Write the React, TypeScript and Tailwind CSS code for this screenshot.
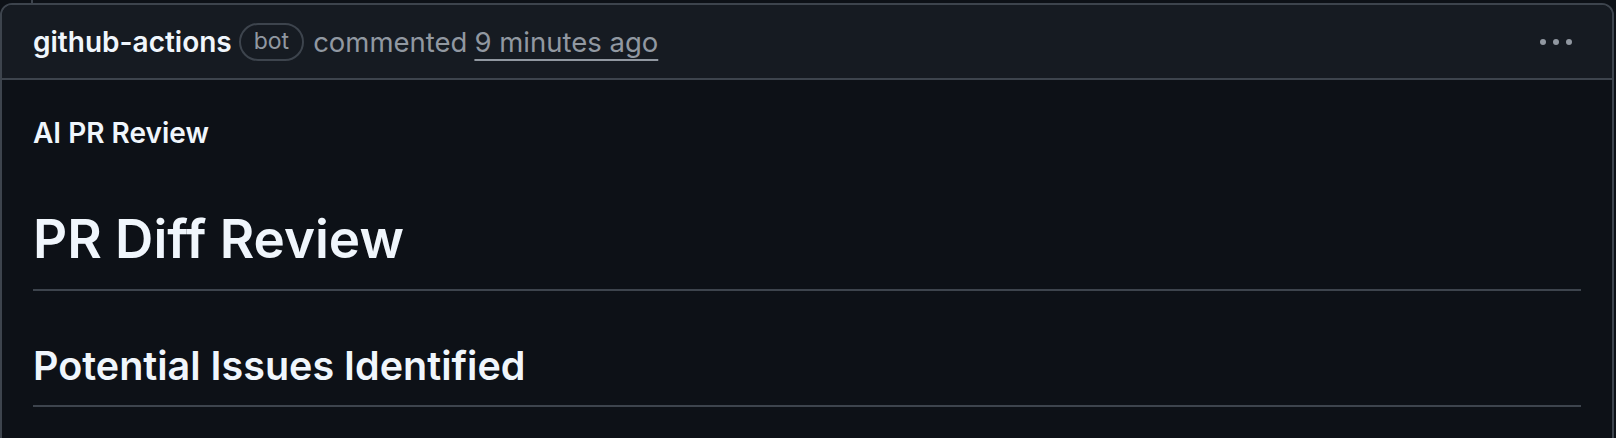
import React from 'react';

const App: React.FC = () => {
  return (
    <div className="w-[1616px] h-[438px] overflow-hidden bg-[#0d1117] pt-[3px] font-['Inter','Liberation_Sans',sans-serif] relative">
      {/* timeline line above card */}
      <div className="absolute left-[31px] top-0 w-[2px] h-[3px] bg-[#3d444d]"></div>

      <div className="w-[1614px] border-2 border-[#3d444d] rounded-t-[12px] overflow-hidden">
        {/* Header */}
        <div className="h-[75px] bg-[#161b22] border-b-2 border-[#3d444d] flex items-center pl-[31px] pr-[40px]">
          <span className="text-[28px] font-semibold text-[#f0f6fc] leading-[36px]">github-actions</span>
          <span className="ml-[7px] h-[38px] px-[13px] rounded-full border-2 border-[#3d444d] text-[23px] text-[#9198a1] flex items-center leading-none">bot</span>
          <span className="ml-[9px] text-[27.5px] text-[#9198a1] leading-[36px]">commented</span>
          <span className="ml-[7px] text-[27.5px] text-[#9198a1] leading-[36px] underline underline-offset-[7px] decoration-2">9 minutes ago</span>
          <div className="ml-auto flex gap-[7px]">
            <div className="w-[6px] h-[6px] rounded-full bg-[#9198a1]"></div>
            <div className="w-[6px] h-[6px] rounded-full bg-[#9198a1]"></div>
            <div className="w-[6px] h-[6px] rounded-full bg-[#9198a1]"></div>
          </div>
        </div>

        {/* Body */}
        <div className="px-[31px] pt-[33px] h-[400px] text-[#f0f6fc]">
          <p className="text-[28px] font-semibold leading-[40px]">AI PR Review</p>
          <h1 className="mt-[54px] text-[53px] font-semibold leading-[65px] pb-[17px] border-b-2 border-[#3d444d]">PR Diff Review</h1>
          <h2 className="mt-[49px] text-[39.5px] font-semibold leading-[52px] pb-[13px] border-b-2 border-[#3d444d]">Potential Issues Identified</h2>
        </div>
      </div>
    </div>
  );
};

export default App;
